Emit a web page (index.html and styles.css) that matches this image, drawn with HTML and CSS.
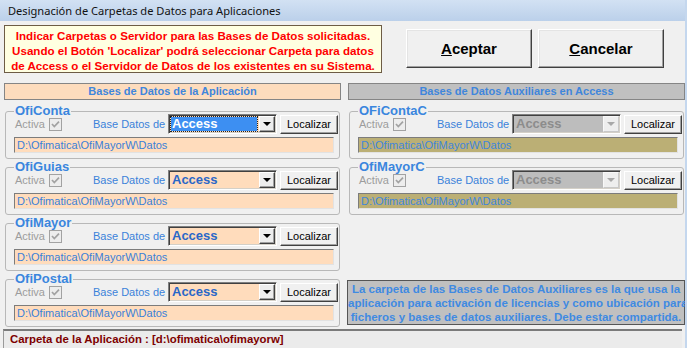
FILE: index.html
```html
<!DOCTYPE html>
<html lang="es">
<head>
    <meta charset="UTF-8">
    <title>Designación de Carpetas de Datos para Aplicaciones</title>
    <link rel="stylesheet" href="styles.css">
</head>
<body>
    <div class="window">
        <div class="titlebar">Designación de Carpetas de Datos para Aplicaciones</div>

        <div class="top">
            <div class="notice">
                Indicar Carpetas o Servidor para las Bases de Datos solicitadas.<br>
                Usando el Botón 'Localizar' podrá seleccionar Carpeta para datos<br>
                de Access o el Servidor de Datos de los existentes en su Sistema.
            </div>
            <div class="actions">
                <button class="big-btn"><u>A</u>ceptar</button>
                <button class="big-btn"><u>C</u>ancelar</button>
            </div>
        </div>

        <div class="panels">
            <div class="col">
                <div class="col-head app">Bases de Datos de la Aplicación</div>

                <fieldset class="db">
                    <legend>OfiConta</legend>
                    <div class="row">
                        <span class="activa">Activa</span>
                        <svg class="check" width="13" height="13" viewBox="0 0 13 13"><rect x="0.5" y="0.5" width="12" height="12" fill="#ededed" stroke="#a2a2a2"/><polyline points="3,6 5.3,8.5 10,3.6" fill="none" stroke="#a2a2a2" stroke-width="1.7"/></svg>
                        <span class="base-label">Base Datos de</span>
                        <div class="combo focus"><span class="combo-text">Access</span><span class="combo-btn"><i></i></span></div>
                        <button class="locate">Localizar</button>
                    </div>
                    <div class="path">D:\Ofimatica\OfiMayorW\Datos</div>
                </fieldset>

                <fieldset class="db">
                    <legend>OfiGuias</legend>
                    <div class="row">
                        <span class="activa">Activa</span>
                        <svg class="check" width="13" height="13" viewBox="0 0 13 13"><rect x="0.5" y="0.5" width="12" height="12" fill="#ededed" stroke="#a2a2a2"/><polyline points="3,6 5.3,8.5 10,3.6" fill="none" stroke="#a2a2a2" stroke-width="1.7"/></svg>
                        <span class="base-label">Base Datos de</span>
                        <div class="combo"><span class="combo-text">Access</span><span class="combo-btn"><i></i></span></div>
                        <button class="locate">Localizar</button>
                    </div>
                    <div class="path">D:\Ofimatica\OfiMayorW\Datos</div>
                </fieldset>

                <fieldset class="db">
                    <legend>OfiMayor</legend>
                    <div class="row">
                        <span class="activa">Activa</span>
                        <svg class="check" width="13" height="13" viewBox="0 0 13 13"><rect x="0.5" y="0.5" width="12" height="12" fill="#ededed" stroke="#a2a2a2"/><polyline points="3,6 5.3,8.5 10,3.6" fill="none" stroke="#a2a2a2" stroke-width="1.7"/></svg>
                        <span class="base-label">Base Datos de</span>
                        <div class="combo"><span class="combo-text">Access</span><span class="combo-btn"><i></i></span></div>
                        <button class="locate">Localizar</button>
                    </div>
                    <div class="path">D:\Ofimatica\OfiMayorW\Datos</div>
                </fieldset>

                <fieldset class="db">
                    <legend>OfiPostal</legend>
                    <div class="row">
                        <span class="activa">Activa</span>
                        <svg class="check" width="13" height="13" viewBox="0 0 13 13"><rect x="0.5" y="0.5" width="12" height="12" fill="#ededed" stroke="#a2a2a2"/><polyline points="3,6 5.3,8.5 10,3.6" fill="none" stroke="#a2a2a2" stroke-width="1.7"/></svg>
                        <span class="base-label">Base Datos de</span>
                        <div class="combo"><span class="combo-text">Access</span><span class="combo-btn"><i></i></span></div>
                        <button class="locate">Localizar</button>
                    </div>
                    <div class="path">D:\Ofimatica\OfiMayorW\Datos</div>
                </fieldset>
            </div>

            <div class="col">
                <div class="col-head aux">Bases de Datos Auxiliares en Access</div>

                <fieldset class="db">
                    <legend>OFiContaC</legend>
                    <div class="row">
                        <span class="activa">Activa</span>
                        <svg class="check" width="13" height="13" viewBox="0 0 13 13"><rect x="0.5" y="0.5" width="12" height="12" fill="#ededed" stroke="#a2a2a2"/><polyline points="3,6 5.3,8.5 10,3.6" fill="none" stroke="#a2a2a2" stroke-width="1.7"/></svg>
                        <span class="base-label">Base Datos de</span>
                        <div class="combo disabled"><span class="combo-text">Access</span><span class="combo-btn"><i></i></span></div>
                        <button class="locate">Localizar</button>
                    </div>
                    <div class="path aux-path">D:\Ofimatica\OfiMayorW\Datos</div>
                </fieldset>

                <fieldset class="db">
                    <legend>OfiMayorC</legend>
                    <div class="row">
                        <span class="activa">Activa</span>
                        <svg class="check" width="13" height="13" viewBox="0 0 13 13"><rect x="0.5" y="0.5" width="12" height="12" fill="#ededed" stroke="#a2a2a2"/><polyline points="3,6 5.3,8.5 10,3.6" fill="none" stroke="#a2a2a2" stroke-width="1.7"/></svg>
                        <span class="base-label">Base Datos de</span>
                        <div class="combo disabled"><span class="combo-text">Access</span><span class="combo-btn"><i></i></span></div>
                        <button class="locate">Localizar</button>
                    </div>
                    <div class="path aux-path">D:\Ofimatica\OfiMayorW\Datos</div>
                </fieldset>

                <div class="aux-note">
                    La carpeta de las Bases de Datos Auxiliares es la que usa la<br>
                    aplicación para activación de licencias y como ubicación para<br>
                    ficheros y bases de datos auxiliares. Debe estar compartida.
                </div>
            </div>
        </div>

        <div class="status">Carpeta de la Aplicación : [d:\ofimatica\ofimayorw]</div>
    </div>
</body>
</html>
```

FILE: styles.css
```css
body {
    margin: 0;
    font-family: "Liberation Sans", Arial, sans-serif;
}
.window {
    width: 687px;
    height: 348px;
    box-sizing: border-box;
    background-color: #f0f0f0;
    border-right: 2px solid #c4d7ee;
    display: flex;
    flex-direction: column;
    overflow: hidden;
}
.titlebar {
    height: 21px;
    flex: none;
    padding-left: 8px;
    background: linear-gradient(#d2e1f3, #bbd0ea);
    font-family: "Noto Sans", sans-serif;
    font-size: 11.1px;
    line-height: 21px;
    color: #111;
}

/* aviso + botones */
.top {
    height: 62px;
    flex: none;
    box-sizing: border-box;
    padding: 4px 0 0 4px;
    display: flex;
    align-items: flex-start;
}
.notice {
    width: 378px;
    height: 48px;
    box-sizing: border-box;
    padding-top: 2px;
    border: 1px solid #6d5c45;
    background-color: #ffffe1;
    color: #ff0000;
    font-weight: bold;
    font-size: 11.6px;
    line-height: 15px;
    text-align: center;
    white-space: nowrap;
}
.actions {
    display: flex;
    gap: 6px;
    margin: 4px 0 0 24px;
}
.big-btn {
    width: 126px;
    height: 39px;
    padding: 0;
    background-color: #f0f0f0;
    border: 1px solid;
    border-color: #fff #404040 #404040 #fff;
    box-shadow: inset -1px -1px #a0a0a0, inset 1px 1px #e4e4e4;
    font-family: "Liberation Sans", Arial, sans-serif;
    font-weight: bold;
    font-size: 15px;
    color: #000;
}

/* columnas */
.panels {
    flex: none;
    display: grid;
    grid-template-columns: 337px 337px;
    column-gap: 7px;
    padding-left: 4px;
}
.col {
    display: flex;
    flex-direction: column;
}
.col-head {
    height: 17px;
    box-sizing: border-box;
    border: 1px solid #858585;
    font-weight: bold;
    font-size: 11px;
    line-height: 15px;
    text-align: center;
    color: #3f86dc;
}
.col-head.app {
    background-color: #fddcbd;
}
.col-head.aux {
    background-color: #c0c0c0;
}

fieldset.db {
    margin: 5px 1px 0 1px;
    padding: 0 1px 5px 8px;
    border: 1px solid #b8b8b8;
    border-radius: 3px;
    min-width: 0;
}
.col-head + fieldset.db {
    margin-top: 8px;
}
fieldset.db legend {
    padding: 0 1px;
    font-weight: bold;
    font-size: 13px;
    line-height: 6px;
    color: #3a86de;
}
.row {
    height: 20px;
    display: flex;
    align-items: center;
}
.activa {
    width: 29px;
    margin-left: 1px;
    font-size: 11px;
    color: #9c9c9c;
    white-space: nowrap;
}
.check {
    margin-left: 5px;
    flex: none;
}
.base-label {
    width: 70px;
    margin-left: 31px;
    font-size: 11px;
    color: #3a82da;
    white-space: nowrap;
}

.combo {
    width: 109px;
    height: 20px;
    margin-left: 5px;
    box-sizing: border-box;
    border: 1px solid;
    border-color: #808080 #fff #fff #808080;
    box-shadow: inset 1px 1px #404040, inset -1px -1px #d4d0c8;
    background-color: #ffdcbc;
    display: flex;
    padding: 1px;
}
.combo-text {
    flex: 1;
    padding-left: 2px;
    font-weight: bold;
    font-size: 13px;
    line-height: 16px;
    color: #2a67c8;
}
.combo.focus .combo-text {
    margin: 1px 2px 1px 1px;
    padding-left: 1px;
    line-height: 14px;
    background-color: #3d8ff2;
    color: #fff;
    outline: 1px dotted #222;
}
.combo-btn {
    width: 16px;
    box-sizing: border-box;
    background-color: #ededed;
    border: 1px solid;
    border-color: #fff #404040 #404040 #fff;
    box-shadow: inset -1px -1px #a0a0a0;
    display: flex;
    align-items: center;
    justify-content: center;
}
.combo-btn i {
    width: 0;
    height: 0;
    border-left: 4px solid transparent;
    border-right: 4px solid transparent;
    border-top: 4px solid #000;
}
.combo.disabled {
    background-color: #bdbdbd;
}
.combo.disabled .combo-text {
    color: #8c8c8c;
}
.combo.disabled .combo-btn {
    background-color: #eeeeee;
    border-color: #f8f8f8 #c8c8c8 #c8c8c8 #f8f8f8;
    box-shadow: none;
}
.combo.disabled .combo-btn i {
    border-top-color: #a8a8a8;
}

.locate {
    width: 58px;
    height: 19px;
    margin-left: 3px;
    padding: 0;
    background-color: #f0f0f0;
    border: 1px solid;
    border-color: #fff #404040 #404040 #fff;
    box-shadow: inset -1px -1px #a0a0a0;
    font-family: "Liberation Sans", Arial, sans-serif;
    font-size: 11px;
    color: #000;
}

.path {
    width: 320px;
    height: 16px;
    margin-top: 3px;
    box-sizing: border-box;
    padding-left: 2px;
    border: 1px solid;
    border-color: #7c7c7c #e2e2e2 #e2e2e2 #7c7c7c;
    background-color: #ffdcbc;
    font-size: 11px;
    line-height: 14px;
    color: #3a80d8;
    white-space: nowrap;
}
.path.aux-path {
    background-color: #bbaf75;
    color: #3f86dc;
}

.aux-note {
    margin: auto 0 2px -1px;
    height: 45px;
    box-sizing: border-box;
    padding-top: 1px;
    border: 1px solid #555;
    background-color: #c0c0c0;
    font-weight: bold;
    font-size: 11.5px;
    line-height: 14px;
    text-align: center;
    color: #3f8ae2;
    white-space: nowrap;
}

/* barra inferior */
.status {
    flex: 1;
    margin: 2px 3px 0 3px;
    padding-left: 6px;
    border-top: 2px solid #7a7a7a;
    border-left: 1px solid #9a9a9a;
    background-color: #ebebeb;
    font-weight: bold;
    font-size: 11.4px;
    line-height: 17px;
    color: #7d0000;
}
```
